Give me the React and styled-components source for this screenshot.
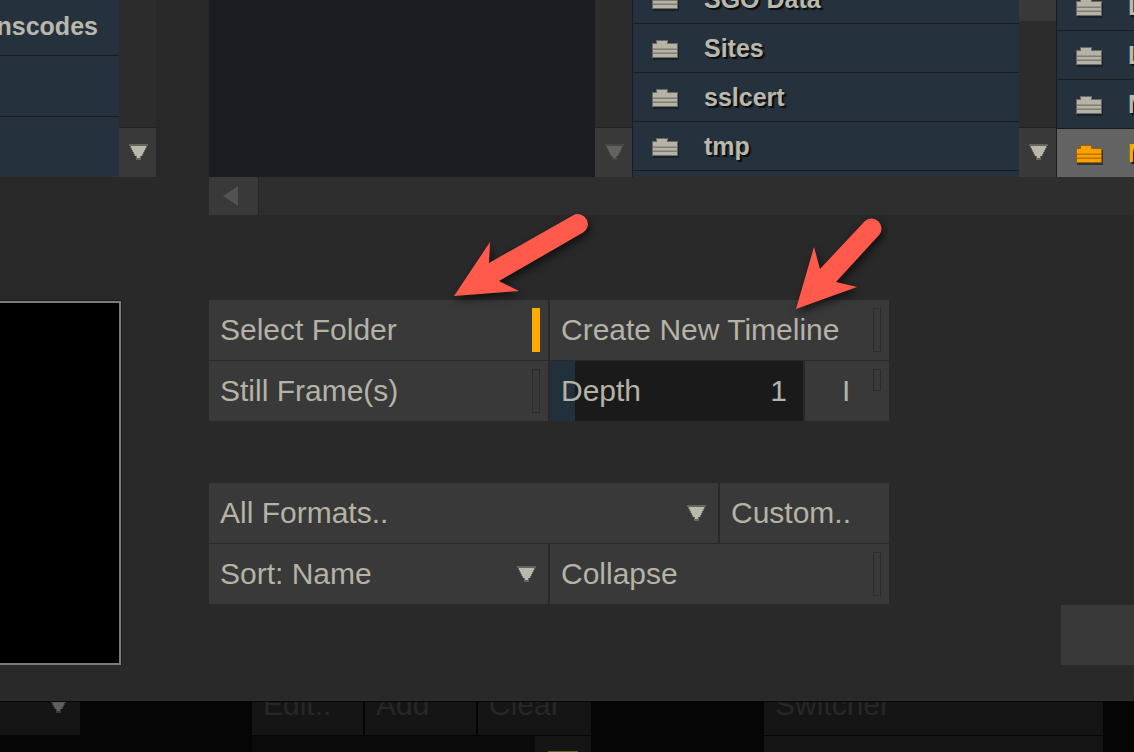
import React from 'react';
import styled, { createGlobalStyle } from 'styled-components';

const Global = createGlobalStyle`
  html, body { margin: 0; padding: 0; background: #050505; }
  body { font-family: "Liberation Sans", Arial, sans-serif; }
`;

const Page = styled.div`
  position: relative;
  width: 1134px;
  height: 752px;
  overflow: hidden;
  background: #050505;
`;

/* ---------- top strip ---------- */
const TopStrip = styled.div`
  display: flex;
  height: 177px;
  overflow: hidden;
  background: #282828;
`;
const ListPane = styled.div`
  flex: none;
  width: ${p => p.$width}px;
  overflow: hidden;
  background: #25313d;
  border-left: ${p => (p.$edge ? '1px solid #1c1c1c' : 'none')};
`;
const ListInner = styled.div`
  margin-top: ${p => p.$top}px;
  margin-left: ${p => p.$left || 0}px;
  width: ${p => p.$inner || 400}px;
`;
const ListRow = styled.div`
  display: flex;
  align-items: center;
  height: ${p => p.$height}px;
  padding-top: ${p => p.$drop || 0}px;
  border-bottom: 1px solid #191c1f;
  background: ${p => (p.$selected ? '#636363' : 'transparent')};
  font-weight: 700;
  font-size: 25px;
  color: ${p => (p.$selected ? '#ffa800' : '#bab7ab')};
  text-shadow: ${p => (p.$plain ? 'none' : '2px 2px 1px #0c0c0c')};
  white-space: nowrap;
`;
const IconSlot = styled.div`
  flex: none;
  width: 71px;
  padding: 3px 0 0 19px;
  box-sizing: border-box;
  display: flex;
  align-items: center;
`;
const ScrollCol = styled.div`
  flex: none;
  width: 37px;
  display: flex;
  flex-direction: column;
  background: #2c2c2c;
`;
const Thumb = styled.div`
  height: 21px;
  background: #393939;
`;
const ScrollSpacer = styled.div`
  flex: 1;
`;
const ScrollBtn = styled.div`
  height: 50px;
  box-sizing: border-box;
  border-top: 1px solid #222;
  background: #393939;
  display: flex;
  align-items: center;
  justify-content: center;
  padding-left: 3px;
`;
const Gap = styled.div`
  flex: none;
  width: 53px;
`;
const DarkPane = styled.div`
  flex: none;
  width: 386px;
  background: #1b1d20;
`;

/* ---------- main panel ---------- */
const Panel = styled.div`
  height: 524px;
  box-sizing: border-box;
  background: #292929;
  display: flex;
  flex-direction: column;
  border-bottom: 1px solid #2f2f2f;
`;
const HScroll = styled.div`
  display: flex;
  height: 38px;
  margin-left: 209px;
  background: #2e2e2e;
`;
const HBtn = styled.div`
  width: 50px;
  background: #393939;
  border-right: 1px solid #262626;
  display: flex;
  align-items: center;
  justify-content: center;
  padding-right: 6px;
  box-sizing: border-box;
`;
const Body = styled.div`
  display: flex;
  flex: 1;
  min-height: 0;
`;
const Preview = styled.div`
  flex: none;
  width: 122px;
  height: 365px;
  margin-top: 85px;
  box-sizing: border-box;
  background: #000;
  border: solid #1c1c1c;
  border-width: 1px 1px 0 0;
  box-shadow: inset -2px 2px 0 #7b7b7b, inset 0 -2px 0 #7b7b7b;
`;
const Form = styled.div`
  flex: none;
  width: 680px;
  margin-left: 87px;
  margin-top: 85px;
  display: flex;
  flex-direction: column;
`;
const FormGroup = styled.div`
  display: flex;
  flex-direction: column;
  gap: 1px;
  margin-bottom: 62px;
`;
const FormRow = styled.div`
  display: flex;
  gap: 2px;
`;
const Cell = styled.div`
  flex: none;
  width: ${p => p.$width}px;
  height: 60px;
  box-sizing: border-box;
  padding: 0 ${p => p.$right || 8}px 0 11px;
  background: #393939;
  color: #b5b2a6;
  font-size: 30px;
  display: flex;
  align-items: center;
  justify-content: space-between;
  white-space: nowrap;
`;
const ToggleCell = styled(Cell)`
  padding-left: 37px;
`;
const Indicator = styled.div`
  flex: none;
  width: 8px;
  height: ${p => (p.$short ? 22 : 44)}px;
  box-sizing: border-box;
  background: ${p => (p.$on ? '#ffab00' : 'transparent')};
  border: 1px solid ${p => (p.$on ? '#ffab00' : '#2c2c2c')};
  align-self: ${p => (p.$short ? 'flex-start' : 'center')};
  margin-top: ${p => (p.$short ? 8 : 0)}px;
`;
const SliderCell = styled.div`
  flex: none;
  width: 253px;
  height: 60px;
  box-sizing: border-box;
  padding: 0 16px 0 11px;
  background: linear-gradient(to right, #22303c 25px, #1a1a1a 25px);
  color: #b5b2a6;
  font-size: 30px;
  display: flex;
  align-items: center;
  justify-content: space-between;
`;
const SideBtn = styled.div`
  flex: none;
  width: 73px;
  height: 60px;
  margin-top: 390px;
  margin-left: auto;
  background: #393939;
`;

/* ---------- bottom strip ---------- */
const BottomStrip = styled.div`
  display: flex;
  height: 51px;
  overflow: hidden;
  background: #050505;
  padding-top: 1px;
  box-sizing: border-box;
`;
const BottomLeft = styled.div`
  flex: none;
  width: 80px;
  height: 33px;
  background: #151515;
  display: flex;
  justify-content: flex-end;
  padding-right: 11px;
  box-sizing: border-box;
  overflow: hidden;
`;
const ClippedArrow = styled.div`
  margin-top: -5px;
  opacity: 0.45;
`;
const BottomGroup = styled.div`
  flex: none;
  width: ${p => p.$width}px;
  margin-left: ${p => p.$left}px;
  display: flex;
  flex-direction: column;
  gap: 1px;
`;
const BottomRow = styled.div`
  display: flex;
  gap: 2px;
`;
const DimCell = styled.div`
  flex: ${p => (p.$width ? 'none' : 1)};
  width: ${p => p.$width}px;
  height: 33px;
  overflow: hidden;
  background: #151515;
  color: #272727;
  font-size: 30px;
  padding-left: 11px;
  box-sizing: border-box;
`;
const DimLabel = styled.span`
  display: block;
  line-height: 60px;
  margin-top: -27px;
`;
const BottomLower = styled.div`
  display: flex;
  height: 16px;
`;
const LowerDark = styled.div`
  flex: none;
  width: 283px;
  background: #0a0a0a;
`;
const LowerBtn = styled.div`
  flex: 1;
  background: #151515;
  display: flex;
  justify-content: center;
  align-items: flex-end;
`;
const OliveMark = styled.div`
  width: 30px;
  height: 1px;
  background: #5a6420;
`;
const LowerFill = styled.div`
  height: 16px;
  background: #151515;
`;

const ArrowLayer = styled.svg`
  position: absolute;
  left: 0;
  top: 0;
  width: 1134px;
  height: 752px;
  pointer-events: none;
  filter: drop-shadow(2px 4px 4px rgba(0, 0, 0, 0.6));
`;

/* ---------- drawings ---------- */
const Tri = ({ dim }) => (
  <svg width="20" height="17" viewBox="0 0 20 17" shapeRendering="crispEdges" style={{ opacity: dim ? 0.33 : 1, display: 'block', flex: 'none' }}>
    <path d="M0 0H19V2H18V4H17V6H16V8H15V10H14V12H12V16H7V12H5V10H4V8H3V6H2V4H1V2H0Z" fill="#65645e" />
    <path d="M2 2H17V4H16V6H15V8H14V10H13V12H11V14H8V12H6V10H5V8H4V6H3V4H2Z" fill="#bab7ab" />
  </svg>
);

const LeftTri = () => (
  <svg width="16" height="20" viewBox="0 0 16 20" style={{ display: 'block' }}>
    <path d="M15 0V20L0 10Z" fill="#525250" />
  </svg>
);

const Folder = ({ on }) => {
  const face = on ? '#ffa200' : '#b5b2a6';
  const line = on ? '#b87604' : '#7f7d75';
  const edge = on ? '#94600c' : '#6a6963';
  return (
    <svg width="27" height="20" viewBox="0 0 27 20" style={{ display: 'block', flex: 'none' }}>
      <rect x="1" y="5" width="26" height="15" fill="#14181c" opacity="0.6" />
      <path d="M0 3H4V0H16V3H26V18H0Z" fill={edge} />
      <path d="M1 4H5V1H15V4H25V17H1Z" fill={face} />
      <rect x="1" y="8.5" width="24" height="1.5" fill={line} />
      <rect x="1" y="12.5" width="24" height="1.5" fill={line} />
    </svg>
  );
};

const Row = ({ name, height, selected, plain, drop }) => (
  <ListRow $height={height} $selected={selected} $plain={plain} $drop={drop}>
    <IconSlot><Folder on={selected} /></IconSlot>
    {name}
  </ListRow>
);

export default function App() {
  return (
    <Page>
      <Global />
      <TopStrip>
        <ListPane $width={119}>
          <ListInner $top={-5} $left={-112} $inner={231}>
            <Row name="Transcodes" height={58} drop={2} plain />
            <Row name="" height={58} drop={2} plain />
            <Row name="" height={58} drop={2} plain />
          </ListInner>
        </ListPane>
        <ScrollCol>
          <ScrollSpacer />
          <ScrollBtn><Tri /></ScrollBtn>
        </ScrollCol>
        <Gap />
        <DarkPane />
        <ScrollCol>
          <ScrollSpacer />
          <ScrollBtn><Tri dim /></ScrollBtn>
        </ScrollCol>
        <ListPane $width={386} $edge>
          <ListInner $top={-25}>
            <Row name="SGO Data" height={48} />
            <Row name="Sites" height={48} />
            <Row name="sslcert" height={48} />
            <Row name="tmp" height={48} />
            <Row name="" height={48} />
          </ListInner>
        </ListPane>
        <ScrollCol>
          <Thumb />
          <ScrollSpacer />
          <ScrollBtn><Tri /></ScrollBtn>
        </ScrollCol>
        <ListPane $width={77} $edge>
          <ListInner $top={-18}>
            <Row name="Library" height={48} />
            <Row name="Logs" height={48} />
            <Row name="Movies" height={48} />
            <Row name="Music" height={48} selected />
          </ListInner>
        </ListPane>
      </TopStrip>

      <Panel>
        <HScroll>
          <HBtn><LeftTri /></HBtn>
        </HScroll>
        <Body>
          <Preview />
          <Form>
            <FormGroup>
              <FormRow>
                <Cell $width={339}>Select Folder<Indicator $on /></Cell>
                <Cell $width={339}>Create New Timeline<Indicator /></Cell>
              </FormRow>
              <FormRow>
                <Cell $width={339}>Still Frame(s)<Indicator /></Cell>
                <SliderCell><span>Depth</span><span>1</span></SliderCell>
                <ToggleCell $width={84}>I<Indicator $short /></ToggleCell>
              </FormRow>
            </FormGroup>
            <FormGroup>
              <FormRow>
                <Cell $width={509} $right={11}>All Formats..<Tri /></Cell>
                <Cell $width={169}>Custom..</Cell>
              </FormRow>
              <FormRow>
                <Cell $width={339} $right={11}>Sort: Name<Tri /></Cell>
                <Cell $width={339}>Collapse<Indicator /></Cell>
              </FormRow>
            </FormGroup>
          </Form>
          <SideBtn />
        </Body>
      </Panel>

      <BottomStrip>
        <BottomLeft>
          <ClippedArrow><Tri /></ClippedArrow>
        </BottomLeft>
        <BottomGroup $left={172} $width={339}>
          <BottomRow>
            <DimCell $width={111}><DimLabel>Edit..</DimLabel></DimCell>
            <DimCell $width={111}><DimLabel>Add</DimLabel></DimCell>
            <DimCell $width={113}><DimLabel>Clear</DimLabel></DimCell>
          </BottomRow>
          <BottomLower>
            <LowerDark />
            <LowerBtn><OliveMark /></LowerBtn>
          </BottomLower>
        </BottomGroup>
        <BottomGroup $left={173} $width={339}>
          <DimCell><DimLabel>Switcher</DimLabel></DimCell>
          <LowerFill />
        </BottomGroup>
      </BottomStrip>

      <ArrowLayer viewBox="0 0 1134 752">
        <path d="M454 296L490 242L489 263L572.9 215.4A10 10 0 0 1 583.1 232.6L499 281L519 291Z" fill="#ff5a4c" />
        <path d="M796 309L814 247L820 269L864.7 221.2A10 10 0 0 1 879.3 234.8L836 282L857 287Z" fill="#ff5a4c" />
      </ArrowLayer>
    </Page>
  );
}
